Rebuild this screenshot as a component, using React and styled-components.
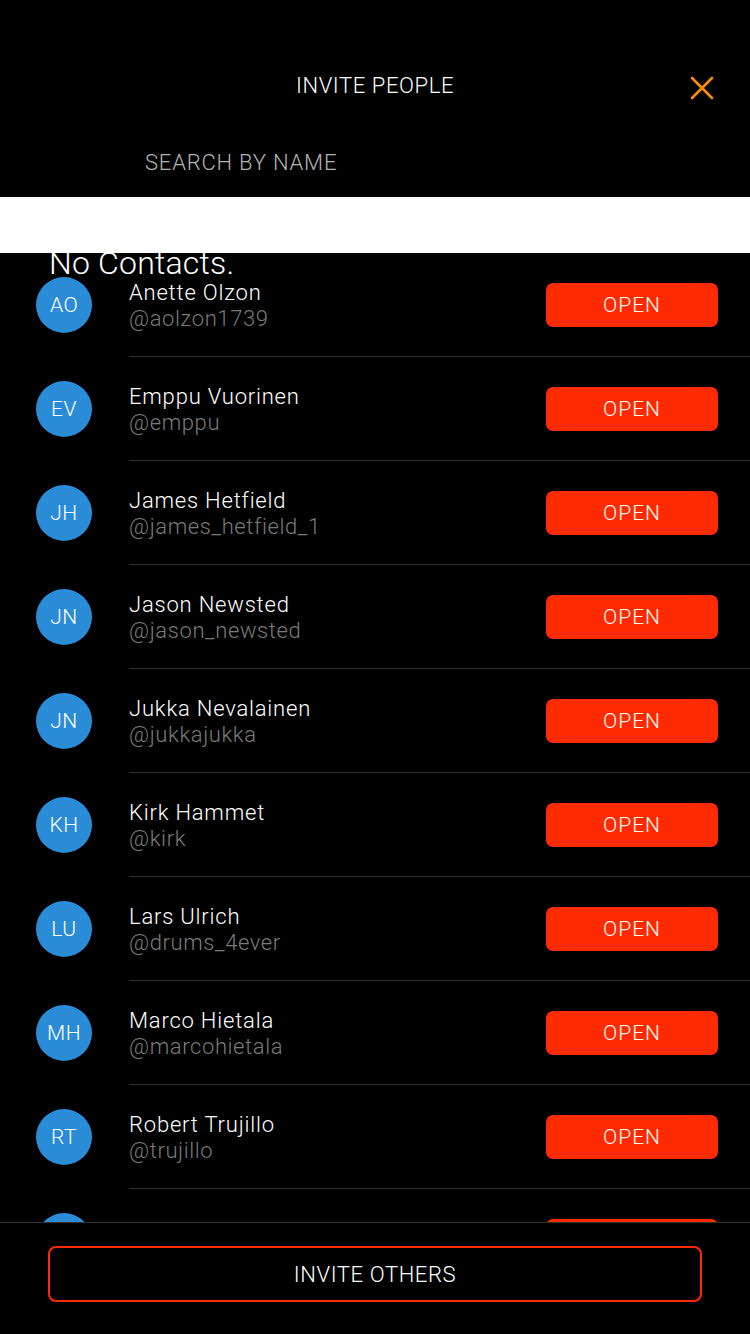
import React from "react";
import styled, { createGlobalStyle } from "styled-components";

const GlobalStyle = createGlobalStyle`
  html, body {
    margin:0;
    padding:0;
    background:#000000;
  }
  body {
    font-family:"Roboto", "Liberation Sans", sans-serif;
  }
`;

const Screen = styled.div`
  width:750px;
  height:1334px;
  background:#000000;
  display:flex;
  flex-direction:column;
  overflow:hidden;
`;

const Header = styled.div`
  height:120px;
  display:flex;
  align-items:center;
  justify-content:center;
  position:relative;
  padding-top:50px;
  box-sizing:border-box;
`;

const Title = styled.h1`
  margin:0;
  font-size:22px;
  font-weight:300;
  color:#ffffff;
  letter-spacing:0.6px;
`;

const CloseButton = styled.button`
  position:absolute;
  right:35px;
  top:75px;
  width:26px;
  height:26px;
  padding:0;
  border:none;
  background:none;
  display:flex;
  align-items:center;
  justify-content:center;
`;

const SearchRow = styled.div`
  height:77px;
  display:flex;
  align-items:center;
  padding-left:145px;
  padding-top:8px;
  box-sizing:border-box;
`;

const SearchLabel = styled.span`
  font-size:22px;
  font-weight:300;
  color:#b4b4b4;
  letter-spacing:0.8px;
`;

const SearchInput = styled.div`
  height:56px;
  background:#ffffff;
  position:relative;
  z-index:2;
`;

const ListArea = styled.div`
  flex:1;
  position:relative;
  overflow:hidden;
`;

const EmptyText = styled.div`
  position:absolute;
  left:49px;
  top:-9px;
  font-size:32px;
  font-weight:300;
  color:#ffffff;
  letter-spacing:0.2px;
  z-index:1;
`;

const Row = styled.div`
  height:104px;
  display:flex;
  align-items:center;
`;

const Avatar = styled.div`
  width:56px;
  height:56px;
  border-radius:50%;
  background:#2a8bd6;
  margin-left:36px;
  margin-right:37px;
  flex-shrink:0;
  display:flex;
  align-items:center;
  justify-content:center;
  color:#ffffff;
  font-size:21px;
  font-weight:300;
  letter-spacing:0.5px;
`;

const Info = styled.div`
  flex:1;
  align-self:stretch;
  display:flex;
  align-items:center;
  border-bottom:1px solid #333333;
  padding-right:32px;
`;

const Names = styled.div`
  flex:1;
  display:flex;
  flex-direction:column;
  gap:1px;
  margin-top:1px;
`;

const Name = styled.span`
  font-size:22px;
  font-weight:300;
  color:#ffffff;
  letter-spacing:0.8px;
`;

const Handle = styled.span`
  font-size:22px;
  font-weight:300;
  color:#7a7a7a;
  letter-spacing:0.6px;
`;

const OpenButton = styled.button`
  width:172px;
  height:44px;
  border:none;
  border-radius:7px;
  background:#ff2a00;
  color:#ffffff;
  font-family:inherit;
  font-size:21px;
  font-weight:300;
  letter-spacing:1px;
`;

const Footer = styled.div`
  height:112px;
  flex-shrink:0;
  border-top:1px solid #333333;
  background:#000000;
  display:flex;
  align-items:flex-start;
  justify-content:center;
  padding-top:23px;
  box-sizing:border-box;
`;

const InviteButton = styled.button`
  width:654px;
  height:56px;
  border:2px solid #ff2a00;
  border-radius:8px;
  background:transparent;
  color:#ffffff;
  font-family:inherit;
  font-size:22px;
  font-weight:300;
  letter-spacing:0.6px;
`;

const contacts = [
  { initials: "AO", name: "Anette Olzon", handle: "@aolzon1739" },
  { initials: "EV", name: "Emppu Vuorinen", handle: "@emppu" },
  { initials: "JH", name: "James Hetfield", handle: "@james_hetfield_1" },
  { initials: "JN", name: "Jason Newsted", handle: "@jason_newsted" },
  { initials: "JN", name: "Jukka Nevalainen", handle: "@jukkajukka" },
  { initials: "KH", name: "Kirk Hammet", handle: "@kirk" },
  { initials: "LU", name: "Lars Ulrich", handle: "@drums_4ever" },
  { initials: "MH", name: "Marco Hietala", handle: "@marcohietala" },
  { initials: "RT", name: "Robert Trujillo", handle: "@trujillo" },
  // partly hidden under the footer
  { initials: "", name: "", handle: "" },
];

const App = () => {
  return (
    <Screen>
      <GlobalStyle />
      <Header>
        <Title>INVITE PEOPLE</Title>
        <CloseButton aria-label="close">
          <svg width="24" height="24" viewBox="0 0 24 24">
            <path d="M2 2 L22 22 M22 2 L2 22" stroke="#ff8c00" strokeWidth="2.6" strokeLinecap="round" />
          </svg>
        </CloseButton>
      </Header>
      <SearchRow>
        <SearchLabel>SEARCH BY NAME</SearchLabel>
      </SearchRow>
      <SearchInput />
      <ListArea>
        <EmptyText>No Contacts.</EmptyText>
        {contacts.map((c, i) => (
          <Row key={i}>
            <Avatar>{c.initials}</Avatar>
            <Info>
              <Names>
                <Name>{c.name}</Name>
                <Handle>{c.handle}</Handle>
              </Names>
              <OpenButton>{c.name ? "OPEN" : ""}</OpenButton>
            </Info>
          </Row>
        ))}
      </ListArea>
      <Footer>
        <InviteButton>INVITE OTHERS</InviteButton>
      </Footer>
    </Screen>
  );
};

export default App;
